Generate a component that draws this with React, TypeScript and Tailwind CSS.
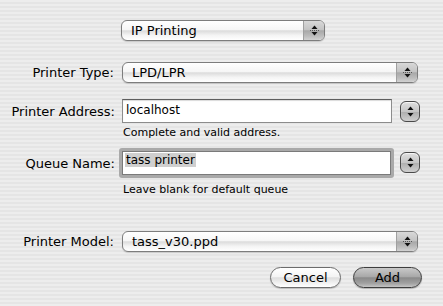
import React from "react";

const Arrows = ({ dotted = false }: { dotted?: boolean }) => (
  <svg width="9" height="13" viewBox="0 0 9 13">
    <polygon points="4.5,1.5 7.5,5 1.5,5" fill="#111" />
    <polygon points="4.5,11.5 7.5,8 1.5,8" fill="#111" />
    {dotted ? <line x1="0" y1="6.5" x2="9" y2="6.5" stroke="#555" strokeDasharray="1 1" /> : null}
  </svg>
);

const Popup = ({ text, className = "" }: { text: string; className?: string }) => (
  <div
    className={`flex h-[21px] rounded-[6px] border border-[#7d7d7d] overflow-hidden bg-[linear-gradient(180deg,#ffffff_0%,#f6f6f6_45%,#dcdcdc_52%,#f4f4f4_75%,#ffffff_100%)] shadow-[0_1px_1px_rgba(0,0,0,0.15)] ${className}`}
  >
    <div className="flex-1 pl-[9px] text-[13px] leading-[19px] text-black">{text}</div>
    <div className="w-[21px] flex items-center justify-center border-l border-[#a0a0a0] bg-[linear-gradient(180deg,#d8d8d8_0%,#c4c4c4_45%,#a8a8a8_52%,#bdbdbd_80%,#d2d2d2_100%)]">
      <Arrows dotted />
    </div>
  </div>
);

const Stepper = () => (
  <div className="w-[20px] h-[21px] rounded-[6px] border border-[#4a4a4a] flex items-center justify-center bg-[linear-gradient(180deg,#dedede_0%,#c6c6c6_50%,#b0b0b0_55%,#cfcfcf_100%)] shadow-[inset_0_1px_1px_rgba(255,255,255,0.8)]">
    <Arrows />
  </div>
);

export default function App() {
  return (
    <div
      className="w-[443px] h-[306px] overflow-hidden bg-[repeating-linear-gradient(180deg,#ededed_0px,#ededed_2px,#e5e5e5_2px,#e5e5e5_4px)] text-black"
      style={{ fontFamily: '"DejaVu Sans", "Liberation Sans", sans-serif' }}
    >
      <div className="pt-[20px] pl-[121px]">
        <Popup text="IP Printing" className="w-[204px]" />
      </div>

      <div className="mt-[21px] flex items-center">
        <div className="w-[115px] text-right text-[13px] pr-[1px]">Printer Type:</div>
        <Popup text="LPD/LPR" className="ml-[7px] w-[296px]" />
      </div>

      <div className="mt-[16px] flex items-start">
        <div className="w-[115px] text-right text-[13px] pt-[3px]">Printer Address:</div>
        <div className="ml-[7px] w-[270px] h-[24px] border border-[#8c8c8c] border-t-[#5e5e5e] bg-white shadow-[inset_0_1px_1px_rgba(0,0,0,0.15)] text-[12px] leading-[14px] pl-[3px] pt-[3px]">
          localhost
        </div>
        <div className="ml-[8px] mt-[2px]">
          <Stepper />
        </div>
      </div>
      <div className="pl-[123px] mt-[3px] text-[11px] leading-[13px]">Complete and valid address.</div>

      <div className="mt-[9px] flex items-start">
        <div className="w-[115px] text-right text-[13px] pt-[6px]">Queue Name:</div>
        <div className="ml-[4px] w-[275px] h-[30px] rounded-[3px] bg-[#a9a9a9] p-[3px]">
          <div className="h-full bg-white border border-[#7a7a7a] text-[12px] leading-[13px] pl-[2px] pt-[2px]">
            <span className="bg-[#cfcfcf] px-[1px]">tass printer</span>
          </div>
        </div>
        <div className="ml-[6px] mt-[4px]">
          <Stepper />
        </div>
      </div>
      <div className="pl-[123px] mt-[5px] text-[11px] leading-[13px]">Leave blank for default queue</div>

      <div className="mt-[35px] flex items-center">
        <div className="w-[115px] text-right text-[13px] pr-[1px]">Printer Model:</div>
        <Popup text="tass_v30.ppd" className="ml-[7px] w-[296px]" />
      </div>

      <div className="mt-[15px] flex justify-end pr-[21px] gap-[12px]">
        <button className="w-[71px] h-[21px] rounded-full border border-[#6c6c6c] text-[13px] leading-[19px] bg-[linear-gradient(180deg,#ffffff_0%,#f4f4f4_45%,#dedede_52%,#f2f2f2_80%,#ffffff_100%)] shadow-[0_1px_1px_rgba(0,0,0,0.2)]">
          Cancel
        </button>
        <button className="w-[69px] h-[21px] rounded-full border border-[#3e3e3e] text-[13px] leading-[19px] bg-[linear-gradient(180deg,#c9c9c9_0%,#a9a9a9_45%,#8a8a8a_52%,#a0a0a0_80%,#c4c4c4_100%)] shadow-[0_1px_1px_rgba(0,0,0,0.25)]">
          Add
        </button>
      </div>
    </div>
  );
}
